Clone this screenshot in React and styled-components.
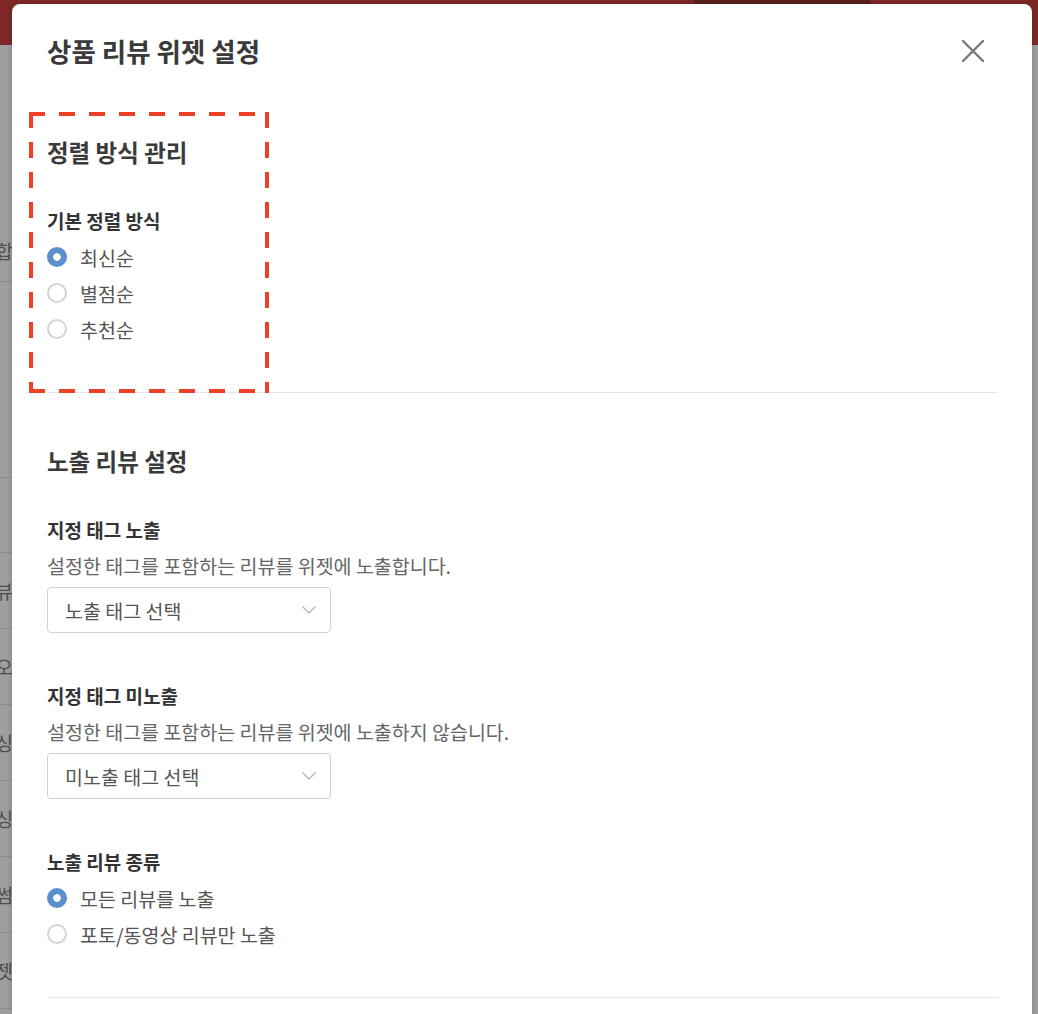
import React from "react";
import styled, { createGlobalStyle } from "styled-components";

const GlobalStyle = createGlobalStyle`
  html, body {
    margin: 0;
    padding: 0;
    height: 100%;
    overflow: hidden;
  }
  body {
    font-family: "Noto Sans CJK KR", "Noto Sans", sans-serif;
    background: #9e9e9e;
  }
  * {
    box-sizing: border-box;
  }
`;

// rows of the page that sits behind the modal, only their right ends show
const backRows = [
  { label: "옵션 조합", height: 237, bottom: true },
  { label: "", height: 196 },
  { label: "", height: 75 },
  { label: "노출 리뷰", height: 76 },
  { label: "위젯 노출 위치 설정 오", height: 76 },
  { label: "상세 페이지 노출 설정 싱", height: 76 },
  { label: "메인 노출 설정 싱", height: 76 },
  { label: "리뷰 썸", height: 76 },
  { label: "위젯", height: 76 },
];

const sortOptions = ["최신순", "별점순", "추천순"];
const reviewTypes = ["모든 리뷰를 노출", "포토/동영상 리뷰만 노출"];

export default function App() {
  return (
    <>
      <GlobalStyle />
      <BackPage>
        <TopBar>
          <TopBarActive />
        </TopBar>
        {backRows.map((row, i) => (
          <BackRow key={i} $height={row.height} $bottom={row.bottom}>
            <BackLabel>{row.label}</BackLabel>
          </BackRow>
        ))}
      </BackPage>

      <Modal>
        <ModalHeader>
          <ModalTitle>상품 리뷰 위젯 설정</ModalTitle>
          <CloseButton aria-label="닫기">
            <svg width="24" height="24" viewBox="0 0 24 24">
              <path
                d="M2 2 L22 22 M22 2 L2 22"
                stroke="#777"
                strokeWidth="2.4"
                strokeLinecap="round"
              />
            </svg>
          </CloseButton>
        </ModalHeader>

        <Section $top={69}>
          <Highlight />
          <SectionTitle>정렬 방식 관리</SectionTitle>
          <Field $first>
            <FieldLabel>기본 정렬 방식</FieldLabel>
            <RadioList>
              {sortOptions.map((opt, i) => (
                <RadioRow key={opt}>
                  <RadioDot $checked={i === 0} />
                  <span>{opt}</span>
                </RadioRow>
              ))}
            </RadioList>
          </Field>
        </Section>

        <Divider />

        <Section $top={53}>
          <SectionTitle>노출 리뷰 설정</SectionTitle>
          <Field $first>
            <FieldLabel>지정 태그 노출</FieldLabel>
            <Description>설정한 태그를 포함하는 리뷰를 위젯에 노출합니다.</Description>
            <Select>
              <span>노출 태그 선택</span>
              <Chevron />
            </Select>
          </Field>
          <Field>
            <FieldLabel>지정 태그 미노출</FieldLabel>
            <Description>
              설정한 태그를 포함하는 리뷰를 위젯에 노출하지 않습니다.
            </Description>
            <Select>
              <span>미노출 태그 선택</span>
              <Chevron />
            </Select>
          </Field>
          <Field>
            <FieldLabel>노출 리뷰 종류</FieldLabel>
            <RadioList>
              {reviewTypes.map((opt, i) => (
                <RadioRow key={opt}>
                  <RadioDot $checked={i === 0} />
                  <span>{opt}</span>
                </RadioRow>
              ))}
            </RadioList>
          </Field>
        </Section>

        <Divider />
      </Modal>
    </>
  );
}

function Chevron() {
  return (
    <svg width="16" height="10" viewBox="0 0 16 10">
      <path
        d="M1.5 1.5 L8 8 L14.5 1.5"
        fill="none"
        stroke="#b5b5b5"
        strokeWidth="1.3"
      />
    </svg>
  );
}

const BackPage = styled.div`
  position: fixed;
  inset: 0;
  background: #9e9e9e;
`;

const TopBar = styled.div`
  height: 45px;
  background: #7d2826;
  display: flex;
  padding-left: 694px;
`;

const TopBarActive = styled.div`
  width: 176px;
  background: #5b1f1d;
`;

const BackRow = styled.div`
  height: ${(p) => p.$height}px;
  width: 13px;
  border-bottom: 1px solid #8c8c8c;
  display: flex;
  align-items: ${(p) => (p.$bottom ? "flex-end" : "center")};
  justify-content: flex-end;
  padding-bottom: ${(p) => (p.$bottom ? 17 : 0)}px;
`;

const BackLabel = styled.span`
  flex-shrink: 0;
  white-space: nowrap;
  font-size: 19px;
  line-height: 26px;
  color: #4e4e4e;
`;

const Modal = styled.div`
  position: fixed;
  top: 4px;
  left: 12px;
  width: 1020px;
  height: calc(100vh - 4px);
  overflow: hidden;
  background: #fff;
  border-radius: 8px 8px 0 0;
  box-shadow: 0 0 6px rgba(0, 0, 0, 0.18);
  padding: 0 34px 0 35px;
  color: #333;
`;

const ModalHeader = styled.div`
  display: flex;
  align-items: center;
  justify-content: space-between;
  padding-top: 29px;
  height: 64px;
`;

const ModalTitle = styled.h1`
  margin: 0;
  font-size: 26.5px;
  line-height: 34px;
  font-weight: 700;
  color: #3a3a3a;
`;

const CloseButton = styled.button`
  border: 0;
  background: none;
  padding: 0;
  margin-right: 13px;
  width: 24px;
  height: 24px;
  cursor: pointer;
`;

const Section = styled.section`
  position: relative;
  padding-top: ${(p) => p.$top}px;
  padding-bottom: 45px;
`;

const Highlight = styled.div`
  position: absolute;
  left: -18px;
  top: 44px;
  width: 240px;
  height: 281px;
  pointer-events: none;
  background:
    repeating-linear-gradient(90deg, #ee4027 0 16px, transparent 16px 30px)
      top left / 100% 4px no-repeat,
    repeating-linear-gradient(90deg, #ee4027 0 16px, transparent 16px 30px)
      bottom left / 100% 4px no-repeat,
    repeating-linear-gradient(180deg, #ee4027 0 16px, transparent 16px 30px)
      top left / 4px 100% no-repeat,
    repeating-linear-gradient(180deg, #ee4027 0 16px, transparent 16px 30px)
      top right / 4px 100% no-repeat;
`;

const SectionTitle = styled.h2`
  margin: 0;
  font-size: 23.5px;
  line-height: 30px;
  font-weight: 700;
  color: #3a3a3a;
`;

const Field = styled.div`
  margin-top: ${(p) => (p.$first ? 42 : 51)}px;
`;

const FieldLabel = styled.div`
  font-size: 19px;
  line-height: 24px;
  font-weight: 700;
  color: #333;
`;

const Description = styled.div`
  margin-top: 12px;
  font-size: 19.5px;
  line-height: 24px;
  color: #666;
`;

const Select = styled.div`
  margin-top: 9px;
  width: 284px;
  height: 46px;
  border: 1px solid #d2d2d2;
  border-radius: 4px;
  display: flex;
  align-items: center;
  justify-content: space-between;
  padding: 0 13px 0 17px;
  font-size: 19.5px;
  color: #555;
`;

const RadioList = styled.div`
  margin-top: 6px;
  display: flex;
  flex-direction: column;
`;

const RadioRow = styled.label`
  display: flex;
  align-items: center;
  gap: 13px;
  height: 36px;
  font-size: 19.5px;
  color: #555;
`;

const RadioDot = styled.span`
  width: 20px;
  height: 20px;
  border-radius: 50%;
  flex-shrink: 0;
  background: ${(p) =>
    p.$checked
      ? "radial-gradient(circle, #fff 0 3.5px, #5b8fcd 4px)"
      : "#fff"};
  border: ${(p) => (p.$checked ? "none" : "2px solid #d3d3d3")};
`;

const Divider = styled.hr`
  margin: 0;
  border: 0;
  border-top: 1px solid #e6e6e6;
`;
